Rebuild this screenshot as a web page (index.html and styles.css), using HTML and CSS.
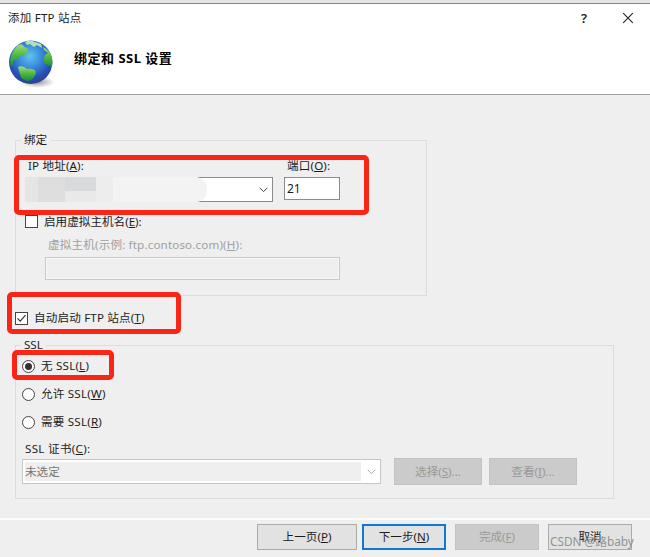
FILE: index.html
```html
<!DOCTYPE html>
<html lang="zh-CN">
<head>
<meta charset="utf-8">
<title>添加 FTP 站点</title>
<link rel="stylesheet" href="styles.css">
</head>
<body>
<main class="dialog">
  <header class="header">
    <div class="titlebar">
      <span class="title">添加 FTP 站点</span>
      <span class="help">?</span>
      <svg class="close" width="12" height="12" viewBox="0 0 12 12"><path d="M1.2 1.2l9.6 9.6M10.8 1.2L1.2 10.8" fill="none" stroke="#222" stroke-width="1.1"/></svg>
    </div>
    <div class="banner">
      <svg class="globe" width="48" height="50" viewBox="0 0 48 50">
        <defs>
          <radialGradient id="sea" cx="48%" cy="36%" r="62%"><stop offset="0" stop-color="#63c3ef"/><stop offset=".4" stop-color="#3a90dc"/><stop offset=".8" stop-color="#2850b8"/><stop offset="1" stop-color="#2c4296"/></radialGradient>
          <radialGradient id="shade"><stop offset="0" stop-color="#666" stop-opacity=".75"/><stop offset="1" stop-color="#888" stop-opacity="0"/></radialGradient>
          <linearGradient id="land" x1="0" y1="0" x2="0" y2="1"><stop offset="0" stop-color="#a5dc7b"/><stop offset=".5" stop-color="#4cb83c"/><stop offset="1" stop-color="#168c35"/></linearGradient>
          <clipPath id="disc"><circle cx="22.7" cy="23.3" r="21.7"/></clipPath>
        </defs>
        <ellipse cx="29" cy="43" rx="18" ry="6" fill="url(#shade)"/>
        <circle cx="22.7" cy="23.3" r="21.7" fill="url(#sea)"/>
        <g clip-path="url(#disc)">
          <path d="M2 25Q2 14 9 7Q15 3 16 8Q21 9 20 13Q16 17 12 17Q10 22 6 21Q5 25 4 28z" fill="url(#land)"/>
          <path d="M17 3Q22 0 27 3L33 5L34 9L29 6L26 8L22 5L19 6z" fill="#b7dfb5"/>
          <path d="M35 8Q43 12 45 20V29Q42 26 37 25Q34 19 38 15L40 14L36 11z" fill="url(#land)"/>
          <path d="M10 28Q15 26 19 30Q26 29 28 33Q27 40 20 42Q13 41 12 35z" fill="url(#land)"/>
        </g>
      </svg>
      <h1 class="heading">绑定和 SSL 设置</h1>
    </div>
  </header>

  <section class="group binding">
    <div class="legend">绑定</div>
    <div class="address-row">
      <div class="field">
        <label class="label ip-label">IP 地址(<u>A</u>):</label>
        <div class="combo ip">
          <div class="mask"><i class="m1"></i><i class="m2"></i><i class="m3"></i><i class="m4"></i><i class="m5"></i></div>
          <svg class="arrow" width="9" height="6" viewBox="0 0 9 6"><path d="M.7.8l3.8 3.8L8.3.8" fill="none" stroke="#444"/></svg>
        </div>
      </div>
      <div class="field">
        <label class="label port-label">端口(<u>O</u>):</label>
        <div class="input port">21</div>
      </div>
    </div>
    <div class="check host-check"><span class="box"></span><span class="host-text">启用虚拟主机名(<u>E</u>):</span></div>
    <label class="host-label">虚拟主机(示例: ftp.contoso.com)(<u>H</u>):</label>
    <div class="input host"></div>
  </section>

  <div class="check auto"><span class="box"><svg width="11" height="11" viewBox="0 0 11 11"><path d="M1.5 5.3l2.7 2.8 5.3-6" fill="none" stroke="#333" stroke-width="1.2"/></svg></span><span class="auto-text">自动启动 FTP 站点(<u>T</u>)</span></div>

  <section class="group ssl">
    <div class="legend ssl-legend">SSL</div>
    <div class="radios">
      <div class="option"><span class="radio on"></span><span>无 SSL(<u>L</u>)</span></div>
      <div class="option"><span class="radio"></span><span>允许 SSL(<u>W</u>)</span></div>
      <div class="option"><span class="radio"></span><span>需要 SSL(<u>R</u>)</span></div>
    </div>
    <label class="cert-label">SSL 证书(<u>C</u>):</label>
    <div class="cert-row">
      <div class="combo cert"><span class="value">未选定</span><svg class="arrow" width="9" height="6" viewBox="0 0 9 6"><path d="M.7.8l3.8 3.8L8.3.8" fill="none" stroke="#aaa"/></svg></div>
      <div class="button small disabled">选择(<u>S</u>)...</div>
      <div class="button small disabled">查看(<u>I</u>)...</div>
    </div>
  </section>

  <footer class="footer">
    <div class="button back">上一页(<u>P</u>)</div>
    <div class="button next">下一步(<u>N</u>)</div>
    <div class="button disabled">完成(<u>F</u>)</div>
    <div class="button cancel">取消</div>
  </footer>

  <div class="mark mark-address"></div>
  <div class="mark mark-auto"></div>
  <div class="mark mark-ssl"></div>
  <div class="watermark">CSDN @路baby</div>
</main>
</body>
</html>
```
FILE: styles.css
```css
* { box-sizing: border-box; }
body {
  margin: 0;
  font: 11.6px/16px "Noto Sans", "Noto Sans CJK SC", sans-serif;
  color: #1c1c1c;
  background: #efefef;
}
u { text-decoration-thickness: 1px; text-underline-offset: 1px; }
.dialog {
  position: relative;
  width: 650px;
  height: 557px;
  overflow: hidden;
  background: #efefef;
  border-top: 3px solid #e6e6e6;
  white-space: nowrap;
}
.header {
  height: 92px;
  background: #fff;
  border-top: 1px solid #858585;
  border-bottom: 1px solid #a2a2a2;
}
.titlebar { display: flex; align-items: center; height: 28px; padding: 0 16px 0 8px; }
.title { flex: 1; font-size: 11.5px; letter-spacing: .25px; }
.help { margin-right: 35px; font-size: 13px; font-weight: 600; }
.banner { display: flex; padding-left: 8px; }
.globe { margin-top: 7px; }
.heading { margin: 17px 0 0 18px; font-size: 13px; letter-spacing: .5px; line-height: 18px; font-weight: 700; color: #000; }

.group { margin-left: 15px; border: 1px solid #dcdcdc; }
.legend { width: 30px; height: 16px; margin: -9px 0 0 5px; padding-left: 3px; background: #efefef; }
.binding { width: 412px; height: 156px; margin-top: 45px; }
.address-row { display: flex; gap: 11px; margin: 9px 0 0 9px; }
.label { display: block; height: 20px; padding-top: 1px; letter-spacing: .15px; }
.ip-label { padding-left: 3px; }
.port-label { padding-left: 3px; }
.combo { display: flex; align-items: center; height: 25px; background: #fff; border: 1px solid #8b8b8b; }
.ip { width: 248px; justify-content: space-between; padding-right: 4px; }
.mask { display: flex; height: 25px; margin-left: -1px; border-radius: 0 12px 12px 0; overflow: hidden; background: #efefef; }
.mask i { height: 25px; }
.m1 { width: 13px; background: #e5e5e5; }
.m2 { width: 27px; background: #dedede; }
.m3 { width: 31px; background: linear-gradient(#d9dadc 14px, #e9e9e9 14px); }
.m4 { width: 17px; background: #ededed; }
.m5 { width: 94px; background: #f3f3f3; }
.input { border: 1px solid #8b8b8b; background: #fff; }
.port { width: 56px; height: 23px; padding-left: 2px; line-height: 21px; font-size: 12px; }
.check { display: flex; align-items: center; height: 16px; }
.box { display: flex; width: 13px; height: 13px; border: 1px solid #444; background: #fff; }
.host-check { margin: 11px 0 0 9px; gap: 6px; }
.host-text { padding-top: 1px; }
.host-label { display: block; margin: 8px 0 0 32px; letter-spacing: .16px; color: #a0a0a0; }
.host { width: 295px; height: 23px; margin: 4px 0 0 29px; background: #efefef; border-color: #c8c8c8; box-shadow: inset 0 0 0 1px #f8f8f8; }

.auto { margin: 14px 0 0 15px; gap: 6px; }
.auto-text { letter-spacing: .15px; }
.ssl { width: 599px; height: 154px; margin-top: 19px; }
.ssl-legend { width: 25px; }
.radios { display: grid; gap: 12px; margin: 5px 0 0 6px; }
.option { display: flex; align-items: center; gap: 6px; height: 16px; letter-spacing: .2px; }
.radio { display: flex; width: 13px; height: 13px; border: 1px solid #444; border-radius: 50%; background: #fff; }
.on::after { content: ""; width: 7px; height: 7px; margin: 2px; border-radius: 50%; background: #333; }
.cert-label { display: block; margin: 11px 0 0 9px; letter-spacing: .3px; }
.cert-row { display: flex; align-items: center; gap: 7px; margin: 1px 0 0 6px; }
.cert { width: 359px; margin-right: 6px; padding: 2px 4px 2px 2px; justify-content: space-between; border-color: #c6c6c6; color: #777; }
.value { width: 336px; height: 19px; line-height: 19px; background: #efefef; }
.button { display: flex; align-items: center; justify-content: center; width: 84px; height: 26px; background: #e2e2e2; border: 1px solid #ababab; }
.small { width: 88px; height: 27px; }
.disabled { background: #cbcbcb; border-color: #c3c3c3; color: #999; }
.footer { display: flex; justify-content: flex-end; gap: 9px; margin-top: 19px; padding: 4px 18px 0 0; border-top: 2px solid #fcfcfc; }
.back { width: 100px; margin-right: -4px; }
.next { border: 2px solid #1279d3; }

.mark { position: absolute; border: 5px solid #f92516; border-radius: 5px; }
.mark-address { left: 14px; top: 152px; width: 355px; height: 60px; }
.mark-auto { left: 7px; top: 289px; width: 174px; height: 42px; }
.mark-ssl { left: 12px; top: 347px; width: 102px; height: 30px; }
.watermark { position: absolute; left: 550px; top: 530px; font-size: 11.8px; color: #939393; }
```
